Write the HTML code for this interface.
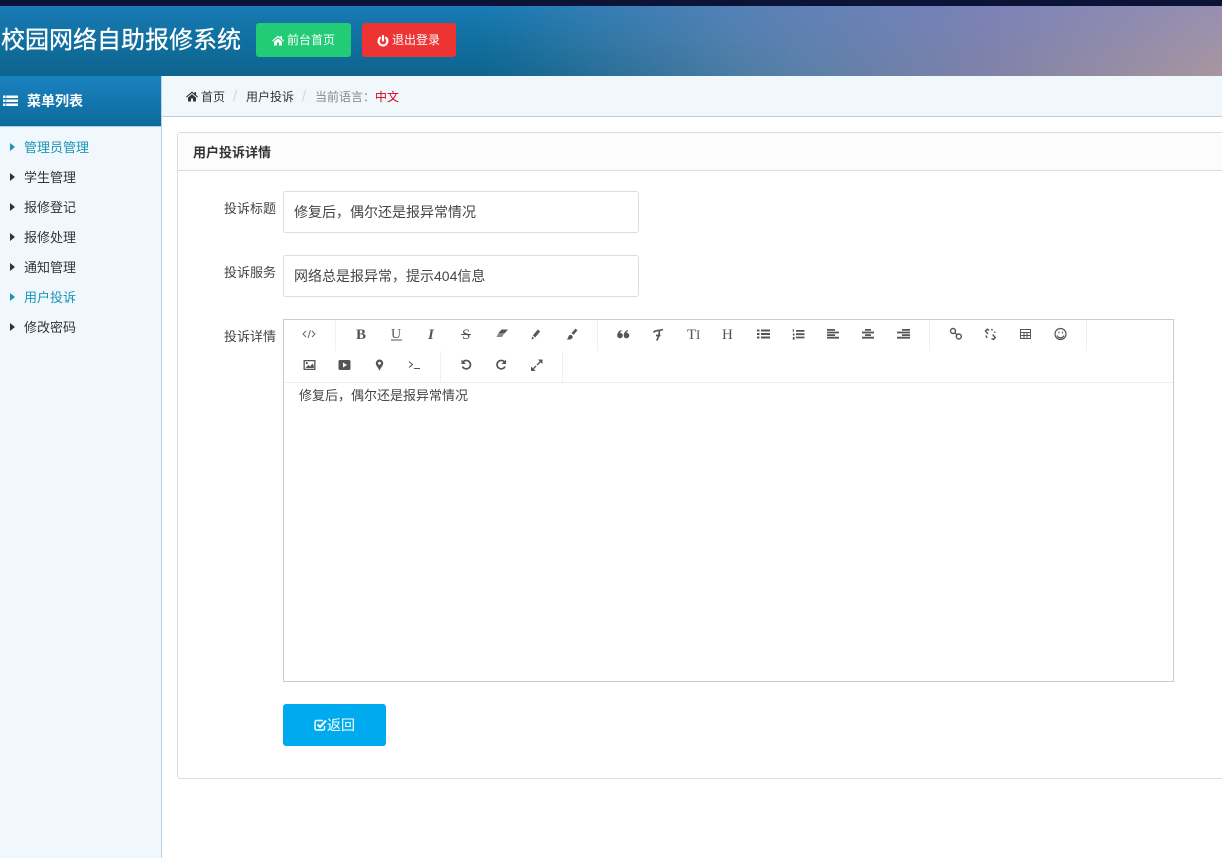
<!DOCTYPE html>
<html lang="zh-CN"><head><meta charset="utf-8"><title>校园网络自助报修系统</title>
<style>
*{box-sizing:border-box}
html,body{margin:0;padding:0;width:1222px;height:858px;overflow:hidden;background:#fff;font-family:"Liberation Sans","Noto Sans CJK SC",sans-serif;font-size:13px;color:#333}
.a{position:absolute;white-space:nowrap}
svg{display:block;overflow:visible}
.sep{position:absolute;width:1px;background:#f0f0f0}
.arrow{position:absolute;left:10px;width:0;height:0;border-left:5px solid #333;border-top:4px solid transparent;border-bottom:4px solid transparent}
.m{position:absolute;left:24px;font-size:13px;line-height:18px;color:#333;white-space:nowrap}
.on{color:#1a95b5}
.arrow.on{border-left-color:#1a95b5}
.inp{position:absolute;left:283px;width:356px;height:42px;border:1px solid #ddd;border-radius:3px;padding-left:10px;line-height:41px;color:#444;font-size:14px;background:#fff}
.lb{position:absolute;left:224px;font-size:13px;line-height:18px;color:#444}
</style></head><body>
<div class="a" style="left:0;top:0;width:1222px;height:6px;background:#0b1436"></div>
<div class="a" style="left:0;top:6px;width:1222px;height:70px;background:linear-gradient(90deg,#11709f 0,#11709f 480px,#4f80a8 740px,#7f82a8 980px,#a9969f 1222px)"></div>
<div class="a" style="left:0;top:6px;width:1222px;height:70px;background:linear-gradient(180deg,rgba(50,150,240,.28) 0,rgba(50,150,240,0) 50%,rgba(0,30,50,.14) 100%);-webkit-mask-image:linear-gradient(90deg,#000 0,#000 500px,transparent 800px);mask-image:linear-gradient(90deg,#000 0,#000 500px,transparent 800px)"></div>
<div class="a" style="left:0;top:6px;width:1222px;height:70px;background:linear-gradient(180deg,rgba(110,130,220,.3) 0,rgba(110,130,220,0) 100%);-webkit-mask-image:linear-gradient(90deg,transparent 500px,#000 800px);mask-image:linear-gradient(90deg,transparent 500px,#000 800px)"></div>
<div class="a" style="left:1px;top:24px;font-size:24px;line-height:34px;color:#fff;-webkit-text-stroke:.3px #fff">校园网络自助报修系统</div>
<div class="a" style="left:256px;top:23px;width:95px;height:34px;background:#22cc77;border-radius:3px;color:#fff;font-size:12px;line-height:35px;padding-left:31px">前台首页</div>
<svg class="a" style="left:272px;top:35px" width="12" height="11" viewBox="0 0 12 11"><path fill="#fff" d="M6 0.5L0 5.7l.7.8L6 2l5.300 4.500.7-.8-2-1.700V1H8.500v1.600zM2 6.600V10.500h3V7.500h2v3h3V6.600L6 3.200z"/></svg>
<div class="a" style="left:362px;top:23px;width:94px;height:34px;background:#ee3333;border-radius:3px;color:#fff;font-size:12px;line-height:35px;padding-left:30px">退出登录</div>
<svg class="a" style="left:377px;top:35px" width="12" height="12" viewBox="0 0 12 12"><path fill="none" stroke="#fff" stroke-width="2.200" stroke-linecap="round" d="M6 1v4.500M3 2.800a4.400 4.400 0 1 0 6 0"/></svg>

<div class="a" style="left:0;top:76px;width:162px;height:782px;background:#f0f8fd;border-right:1px solid #b8d4e6"></div>
<div class="a" style="left:0;top:76px;width:161px;height:51px;background:linear-gradient(180deg,#1a82c0,#0e6a9c);border-bottom:1px solid #a8cfe6"></div>
<svg class="a" style="left:3px;top:95px" width="15" height="12" viewBox="0 0 15 12"><path fill="#fff" d="M0 .5h2.500v2.500H0zM3.200 .5H15v2.500H3.200zM0 4.500h2.500v2.500H0zM3.200 4.500H15v2.500H3.200zM0 8.500h2.500v2.500H0zM3.200 8.500H15v2.500H3.200z"/></svg>
<div class="a" style="left:27px;top:92px;font-size:14px;font-weight:bold;line-height:18px;color:#fff">菜单列表</div>

<i class="arrow on" style="top:143px"></i><div class="m on" style="top:139px">管理员管理</div>
<i class="arrow" style="top:173px"></i><div class="m" style="top:169px">学生管理</div>
<i class="arrow" style="top:203px"></i><div class="m" style="top:199px">报修登记</div>
<i class="arrow" style="top:233px"></i><div class="m" style="top:229px">报修处理</div>
<i class="arrow" style="top:263px"></i><div class="m" style="top:259px">通知管理</div>
<i class="arrow on" style="top:293px"></i><div class="m on" style="top:289px">用户投诉</div>
<i class="arrow" style="top:323px"></i><div class="m" style="top:319px">修改密码</div>

<div class="a" style="left:162px;top:76px;width:1060px;height:41px;background:#f0f8fb;border-bottom:1px solid #c3cdd2"></div>
<svg class="a" style="left:186px;top:91px" width="12" height="11" viewBox="0 0 12 11"><path fill="#333" d="M6 0.5L0 5.700l.7.8L6 2l5.300 4.500.7-.8-2-1.700V1H8.500v1.600zM2 6.600V10.500h3V7.500h2v3h3V6.600L6 3.200z"/></svg>
<div class="a" style="left:201px;top:88px;font-size:12px;line-height:18px;color:#333">首页</div>
<div class="a" style="left:233px;top:87px;font-size:15px;line-height:20px;color:#d5d5d5">/</div>
<div class="a" style="left:246px;top:88px;font-size:12px;line-height:18px;color:#333">用户投诉</div>
<div class="a" style="left:302px;top:87px;font-size:15px;line-height:20px;color:#d5d5d5">/</div>
<div class="a" style="left:315px;top:88px;font-size:12px;line-height:18px;color:#888">当前语言：</div>
<div class="a" style="left:375px;top:88px;font-size:12px;line-height:18px;color:#d9001b">中文</div>

<div class="a" style="left:177px;top:132px;width:1060px;height:647px;border:1px solid #ddd;border-radius:3px;background:#fff"></div>
<div class="a" style="left:178px;top:133px;width:1044px;height:38px;background:#fcfcfc;border-bottom:1px solid #ddd"></div>
<div class="a" style="left:193px;top:144px;font-size:13px;font-weight:bold;line-height:18px;color:#333">用户投诉详情</div>

<div class="lb" style="top:200px">投诉标题</div>
<div class="inp" style="top:191px">修复后，偶尔还是报异常情况</div>
<div class="lb" style="top:264px">投诉服务</div>
<div class="inp" style="top:255px">网络总是报异常，提示404信息</div>
<div class="lb" style="top:328px">投诉详情</div>

<div class="a" style="left:283px;top:319px;width:891px;height:363px;border:1px solid #ccc;background:#fff"></div>
<div class="a" style="left:284px;top:382px;width:889px;height:1px;background:#eee"></div>
<i class="sep" style="left:335px;top:320px;height:31px"></i>
<i class="sep" style="left:597px;top:320px;height:31px"></i>
<i class="sep" style="left:929px;top:320px;height:31px"></i>
<i class="sep" style="left:1086px;top:320px;height:31px"></i>
<i class="sep" style="left:440px;top:351px;height:31px"></i>
<i class="sep" style="left:562px;top:351px;height:31px"></i>

<svg class="a" style="left:284px;top:320px" width="890" height="62" viewBox="284 320 890 62">
<g fill="none" stroke="#666" stroke-width="1">
<path d="M306 331l-3 3 3 3M312 331l3 3-3 3M310.500 330l-2.500 8"/>
</g>
<g font-family="Liberation Serif,serif" fill="#555">
<text x="356" y="339" font-size="15" font-weight="bold">B</text>
<text x="391" y="338" font-size="14">U</text>
<text x="428" y="339" font-size="15" font-style="italic" font-weight="bold">I</text>
<text x="462" y="339" font-size="15">S</text>
<text x="687" y="339" font-size="15">T</text>
<text x="696" y="339" font-size="13">I</text>
<text x="722" y="339" font-size="15">H</text>
</g>
<path fill="none" stroke="#555" stroke-width="1" d="M461 334.500h10"/>
<path fill="#555" d="M391 339.500h11v1h-11z"/>
<path fill="#555" d="M498.500 333l3-3.500h6.500l-3.500 4z"/>
<path fill="#888" d="M498.500 333h6l-2.500 4h-5.500z"/>
<path fill="none" stroke="#555" stroke-width="3" d="M534 336.500l5-6"/>
<path fill="#555" d="M531.500 339.500l.6-3 2.200 1.800z"/>
<path fill="none" stroke="#555" stroke-width="2.600" d="M572.500 334l4-4.500"/>
<path fill="#555" d="M566.500 339.500c2-1 1.500-3 2.500-4 1-1 2-1 3 0s1 2 0 3c-1 1-3 1.200-5.500 1z"/>
<g fill="#555">
<circle cx="620" cy="335.500" r="2.800"/><circle cx="626.500" cy="335.500" r="2.800"/>
<path d="M617.300 335c.3-2.500 1.500-4 4-5l.4 1c-1.500.8-2 1.700-2 3zM623.800 335c.3-2.500 1.500-4 4-5l.4 1c-1.500.8-2 1.700-2 3z"/>
</g>
<path fill="none" stroke="#555" stroke-width="1.700" d="M653.500 332.500c1.500-2.500 5-1.500 9.500-3M659.500 330.500c-.2 3.500-.5 6.500-2.800 10M656 335.500h4.500"/>
<path fill="#555" d="M757 329.500h2.500v2H757zM761 329.500h9v2h-9zM757 333h2.500v2H757zM761 333h9v2h-9zM757 336.500h2.500v2H757zM761 336.500h9v2h-9z"/>
<path fill="#555" d="M792.800 329h1v3h-1zM792.800 333.500h1.700v2h-1.700zM792.800 337h1.700v2.800h-1.700zM796 330h8.500v1.800H796zM796 333.300h8.500v1.800H796zM796 336.600h8.500v1.800H796z"/>
<path fill="#555" d="M827 329h8v1.800h-8zM827 331.600h12v1.800h-12zM827 334.200h8v1.800h-8zM827 336.800h12v1.800h-12z"/>
<path fill="#555" d="M865 329h6v1.800h-6zM862 331.600h12v1.800h-12zM865 334.200h6v1.800h-6zM862 336.800h12v1.800h-12z"/>
<path fill="#555" d="M902 329h8v1.800h-8zM897 331.600h13v1.800h-13zM902 334.200h8v1.800h-8zM897 336.800h13v1.800h-13z"/>
<g fill="none" stroke="#555" stroke-width="1.400">
<circle cx="953" cy="331" r="2.500"/><circle cx="958.800" cy="336.500" r="2.500"/>
<path d="M955 333l2 1.700"/>
<path d="M989 330.500l-1.800-1.300-1.700 1.700 2.500 3M991.500 338.500l2 1 1.700-2-2.500-3M991.500 329l1 1.500M994 332l1.500.5M986 335.500l1 2.500"/>
<circle cx="1060.500" cy="334" r="5.500" stroke-width="1.200"/>
<path stroke-width="1.300" d="M1057 335.500a3.800 3.800 0 0 0 7 0"/>
</g>
<g fill="none" stroke="#555" stroke-width="1"><path d="M1020.500 329.500h10v9h-10zM1020.500 332.500h10M1020.500 335.500h10M1024 332.500v6M1027 332.500v6"/></g>
<path fill="#555" d="M1058.500 331.500h1v2h-1zM1062 331.500h1v2h-1z"/>

<path fill="#555" fill-rule="evenodd" d="M303.500 360h12v10h-12zM304.800 361.300v7.400h9.400v-7.400zM305.500 368l2.800-3 2 1.500 2-3 1.500 2v2.500zM306.800 362a1.100 1.100 0 1 0 .01 0z"/>
<path fill="#555" fill-rule="evenodd" d="M340 360h9a1.500 1.500 0 0 1 1.500 1.500v7a1.500 1.500 0 0 1-1.500 1.500h-9a1.500 1.500 0 0 1-1.500-1.500v-7a1.500 1.500 0 0 1 1.500-1.500zM343 362.500v5l4-2.500z"/>
<path fill="#555" fill-rule="evenodd" d="M379.500 359.500a3.700 3.700 0 0 1 3.700 3.700c0 2.300-2.500 4.500-3.700 7.500-1.200-3-3.700-5.200-3.700-7.500a3.700 3.700 0 0 1 3.700-3.700zM379.500 361.700a1.500 1.500 0 1 0 .01 0z"/>
<g fill="none" stroke="#555" stroke-width="1">
<path d="M409 361.500l3.500 3-3.500 3M414 368.500h6"/>
</g>
<g fill="none" stroke="#555" stroke-width="1.700">
<path d="M463 362a4.200 4.200 0 1 1-.5 4.500"/>
<path d="M504.500 362a4.200 4.200 0 1 0 .5 4.500"/>
<path stroke-width="1.300" d="M537 365l4-4M536 366l-3.500 3.500"/>
</g>
<path fill="#555" d="M461.500 359.500v4.500h4.500zM506 359.500v4.500h-4.500z"/>
<path fill="#555" d="M538 359.500h4.500v4.500zM531 366.500v4.500h4.500z"/>
</svg>

<div class="a" style="left:299px;top:387px;font-size:13px;line-height:18px;color:#444">修复后，偶尔还是报异常情况</div>

<div class="a" style="left:283px;top:704px;width:103px;height:42px;background:#00aaee;border-radius:3px;color:#fff;font-size:14px;line-height:43px;padding-left:44px">返回</div>
<svg class="a" style="left:314px;top:719px" width="14" height="12" viewBox="0 0 14 12"><path fill="none" stroke="#fff" stroke-width="1.400" d="M10.500 7v2.500a1.500 1.500 0 0 1-1.500 1.500H2.500A1.500 1.500 0 0 1 1 9.500V3a1.500 1.500 0 0 1 1.500-1.500H9"/><path fill="none" stroke="#fff" stroke-width="2" d="M3.500 5.500l2.500 2.500 6-6.500"/></svg>
</body></html>
